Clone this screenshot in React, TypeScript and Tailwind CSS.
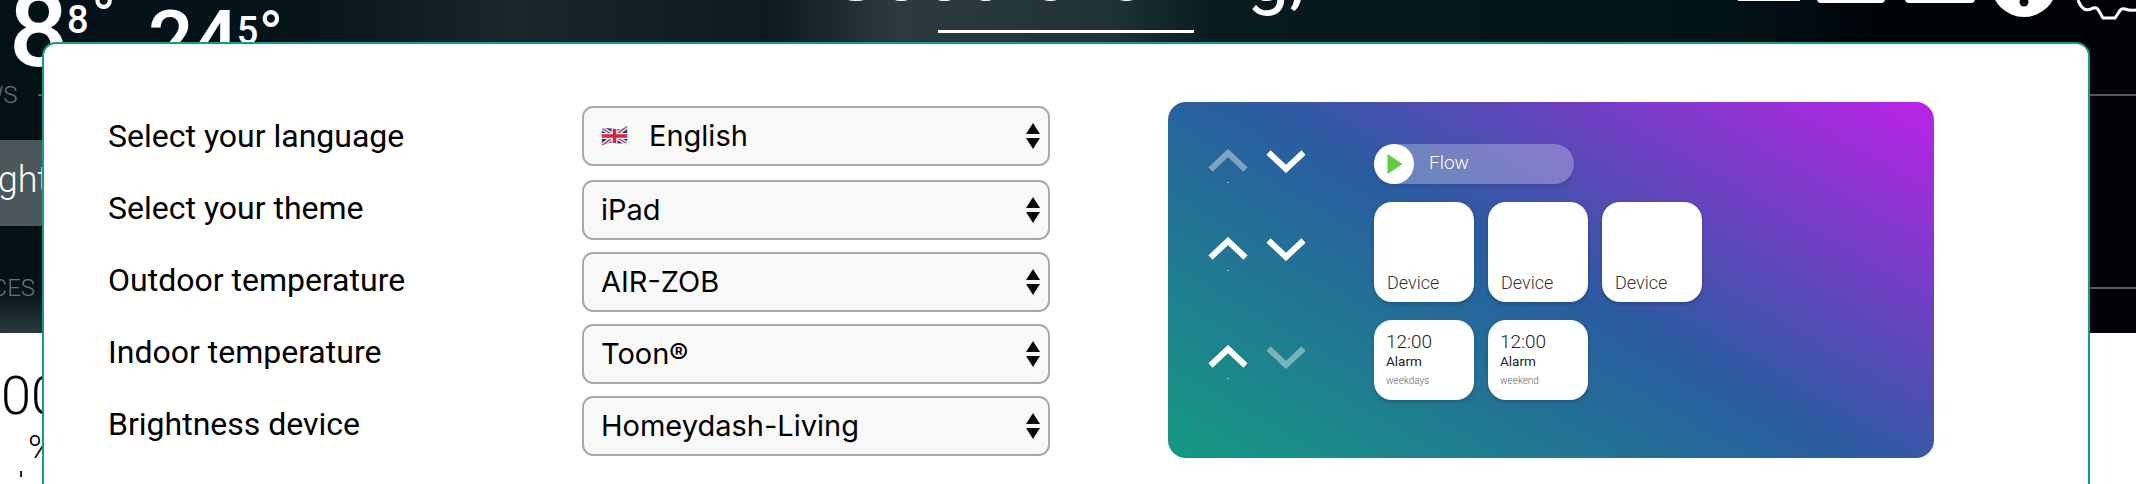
const Chevron = ({ up, dim }: { up?: boolean; dim?: boolean }) => (
  <svg width="40" height="24" viewBox="0 0 40 24" fill="none" className={dim ? "opacity-40" : ""}>
    <polyline
      points={up ? "2.5,20.5 20,4 37.5,20.5" : "2.5,3.5 20,20 37.5,3.5"}
      stroke="white"
      strokeWidth="6"
      strokeLinejoin="miter"
    />
  </svg>
);

const Arrows = () => (
  <svg width="14" height="26" viewBox="0 0 14 26" className="shrink-0">
    <path d="M7 0 L14 11 L0 11 Z M0 15 L14 15 L7 26 Z" fill="#0a0a0a" />
  </svg>
);

const Flag = () => (
  <svg width="27" height="20" viewBox="0 0 26 20" className="mr-[21px] shrink-0">
    <defs>
      <clipPath id="wave">
        <path d="M0 3 Q6 1.5 13 3 T26 0 V16.5 Q19 18 13 17 T0 19.5 Z" />
      </clipPath>
    </defs>
    <g clipPath="url(#wave)">
      <rect width="26" height="20" fill="#27397f" />
      <path d="M0 2 L26 18 M26 0 L0 20" stroke="#eceef2" strokeWidth="4" />
      <path d="M0 2 L26 18 M26 0 L0 20" stroke="#d3283f" strokeWidth="1.4" />
      <path d="M13 0 V20 M0 10 H26" stroke="#eceef2" strokeWidth="6" />
      <path d="M13 0 V20 M0 10 H26" stroke="#d3283f" strokeWidth="3.4" />
    </g>
  </svg>
);

const Row = ({ label, value, flag, cls, labelCls }: { label: string; value: string; flag?: boolean; cls: string; labelCls: string }) => (
  <div className={`flex items-center ${cls}`}>
    <div className={`w-[474px] font-[Roboto,sans-serif] text-[32px] leading-[36px] text-black ${labelCls}`}>{label}</div>
    <div className="flex h-[60px] w-[468px] items-center rounded-[11px] border-2 border-[#a9a9a9] bg-[#f8f8f8] pl-[17px] pr-[8px] font-[Inter,sans-serif] text-[29px] text-black">
      {flag && <Flag />}
      <span className="flex-1">{value}</span>
      <Arrows />
    </div>
  </div>
);

const ChevronRow = ({ dimUp, dimDown, cls }: { dimUp?: boolean; dimDown?: boolean; cls: string }) => (
  <div className={`relative flex gap-[18px] ${cls}`}>
    <Chevron up dim={dimUp} />
    <Chevron dim={dimDown} />
    <span className="absolute left-[19px] top-[33px] h-px w-[2px] bg-white/50" />
  </div>
);

const DeviceCard = () => (
  <div className="flex h-[100px] w-[100px] items-end rounded-[18px] bg-white pb-[8px] pl-[13px] font-[Roboto,sans-serif] text-[18px] font-light leading-[22px] text-[#333] shadow-[0_2px_4px_rgba(0,0,0,0.2)]">
    Device
  </div>
);

const AlarmCard = ({ sub }: { sub: string }) => (
  <div className="flex h-[80px] w-[100px] flex-col rounded-[18px] bg-white pl-[12px] pt-[11px] font-[Roboto,sans-serif] shadow-[0_2px_4px_rgba(0,0,0,0.2)]">
    <span className="text-[19px] font-light leading-[22px] text-[#222]">12:00</span>
    <span className="text-[13.5px] leading-[16px] text-[#222]">Alarm</span>
    <span className="mt-[5px] text-[10px] font-light leading-[14px] text-[#666]">{sub}</span>
  </div>
);

const TopIcons = () => (
  <svg width="398" height="30" viewBox="0 0 398 30" className="ml-auto shrink-0" fill="white">
    <rect x="0" y="-8" width="62" height="9" />
    <rect x="79" y="-10" width="68" height="13" rx="4" />
    <rect x="167" y="-10" width="70" height="13" rx="4" />
    <circle cx="286" cy="-16" r="33" />
    <circle cx="286" cy="2" r="4.5" fill="#02060a" />
    <path
      d="M340 0 Q342 6 346 9 Q351 11 355 8 Q359 7 361 11 L365 18 L377 18 L381 12 Q383 8 387 9 Q392 11 398 10"
      fill="none"
      stroke="white"
      strokeWidth="3"
    />
  </svg>
);

export default function App() {
  return (
    <div className="relative h-[484px] w-[2136px] overflow-hidden bg-white">
      <header className="flex h-[333px] flex-col overflow-hidden bg-[radial-gradient(ellipse_230px_45px_at_20px_100%,rgba(70,85,92,0.6),transparent),linear-gradient(90deg,#021117_0%,#04141a_14%,#18272d_24%,#0b1a20_36%,#2b3a40_42%,#1f3238_52%,#071a20_57%,#02141a_80%,#000409_88%,#000207_100%)]">
        <div className="flex h-[84px] shrink-0 items-start">
          <div className="ml-[9px] -mt-[21px] flex items-start font-[Roboto,sans-serif] font-medium text-white">
            <span className="text-[104px] leading-[104px]">8</span>
            <span className="-ml-[1px] mt-[22px] text-[38px] leading-[38px]">8</span>
            <span className="ml-[2.5px] mt-[5.5px] text-[66px] font-normal leading-[66px]">°</span>
          </div>
          <div className="ml-[32px] flex items-start font-[Roboto,sans-serif] font-medium text-white">
            <span className="text-[80px] leading-[80px]">24</span>
            <span className="-ml-[2px] mt-[12px] text-[38px] leading-[38px]">5</span>
            <span className="mt-[2.5px] text-[66px] font-normal leading-[66px]">°</span>
          </div>
          <div className="ml-[541px] flex w-[484px] shrink-0 flex-col items-center -mt-[64px]">
            <span className="whitespace-nowrap font-[Roboto,sans-serif] text-[76px] leading-[76px] text-white">Good evening,</span>
            <span className="mt-[18px] h-[3px] w-[256px] bg-white" />
          </div>
          <TopIcons />
        </div>

        <div className="flex h-[22px] shrink-0 items-center">
          <span className="-ml-[49px] font-[Roboto,sans-serif] text-[24px] font-light text-[#6b7275]">NEWS</span>
          <span className="ml-[21px] h-[2px] flex-1 bg-[#55585c]" />
        </div>

        <div className="mt-[34px] flex h-[86px] w-[300px] shrink-0 items-center bg-[linear-gradient(90deg,#4b575b,#475357)] pb-[6px]">
          <span className="-ml-[36px] font-[Roboto,sans-serif] text-[36px] font-light text-white">Night</span>
        </div>

        <div className="mt-[50px] flex h-[24px] shrink-0 items-center">
          <span className="-ml-[59px] font-[Roboto,sans-serif] text-[24px] font-light text-[#6b7275]">DEVICES</span>
          <span className="ml-[12px] h-[2px] flex-1 bg-[#55585c]" />
        </div>
      </header>

      <div className="flex flex-col pl-[1px] font-[Roboto,sans-serif] text-black">
        <span className="mt-[33px] text-[54px] font-light leading-[60px]">00</span>
        <span className="ml-[27px] mt-[3px] text-[36px] font-light leading-[40px]">%</span>
        <span className="ml-[19px] mt-[2px] h-[6px] w-[2px] bg-[#222]" />
      </div>

      <section className="absolute left-[42px] top-[42px] flex h-[500px] w-[2048px] rounded-[14px] border-2 border-[#159b88] bg-white pl-[64px] pt-[58px]">
        <div className="flex w-[1060px] shrink-0 flex-col pt-[4px]">
          <Row label="Select your language" value="English" flag cls="mb-[14px]" labelCls="-mt-[1px]" />
          <Row label="Select your theme" value="iPad" cls="mb-[12px]" labelCls="-mt-[4px]" />
          <Row label="Outdoor temperature" value="AIR-ZOB" cls="mb-[12px]" labelCls="-mt-[4px]" />
          <Row label="Indoor temperature" value="Toon®" cls="mb-[12px]" labelCls="-mt-[4px]" />
          <Row label="Brightness device" value="Homeydash-Living" cls="" labelCls="-mt-[4px]" />
        </div>

        <div className="flex h-[356px] w-[766px] shrink-0 rounded-[18px] bg-[linear-gradient(30deg,#159a82,#2a5ca0_50%,#bb22e8)] pl-[40px]">
          <div className="flex w-[166px] shrink-0 flex-col pt-[47px]">
            <ChevronRow dimUp cls="mb-[64px]" />
            <ChevronRow cls="mb-[84px]" />
            <ChevronRow dimDown cls="" />
          </div>
          <div className="flex flex-col pt-[42px]">
            <div className="flex h-[40px] w-[200px] items-center rounded-full bg-white/27 shadow-[0_2px_4px_rgba(0,0,0,0.12)]">
              <span className="flex h-[40px] w-[40px] items-center justify-center rounded-full bg-white pl-[2px]">
                <svg width="16" height="20" viewBox="0 0 16 20">
                  <path d="M1.5 0.5 L15.5 10 L1.5 19.5 Q0.5 20 0.5 18.5 V1.5 Q0.5 0 1.5 0.5 Z" fill="#5fce3f" />
                </svg>
              </span>
              <span className="-mt-[2px] ml-[15px] font-[Roboto,sans-serif] text-[19px] font-light text-white">Flow</span>
            </div>
            <div className="mt-[18px] flex gap-[14px]">
              <DeviceCard />
              <DeviceCard />
              <DeviceCard />
            </div>
            <div className="mt-[18px] flex gap-[14px]">
              <AlarmCard sub="weekdays" />
              <AlarmCard sub="weekend" />
            </div>
          </div>
        </div>
      </section>
    </div>
  );
}
